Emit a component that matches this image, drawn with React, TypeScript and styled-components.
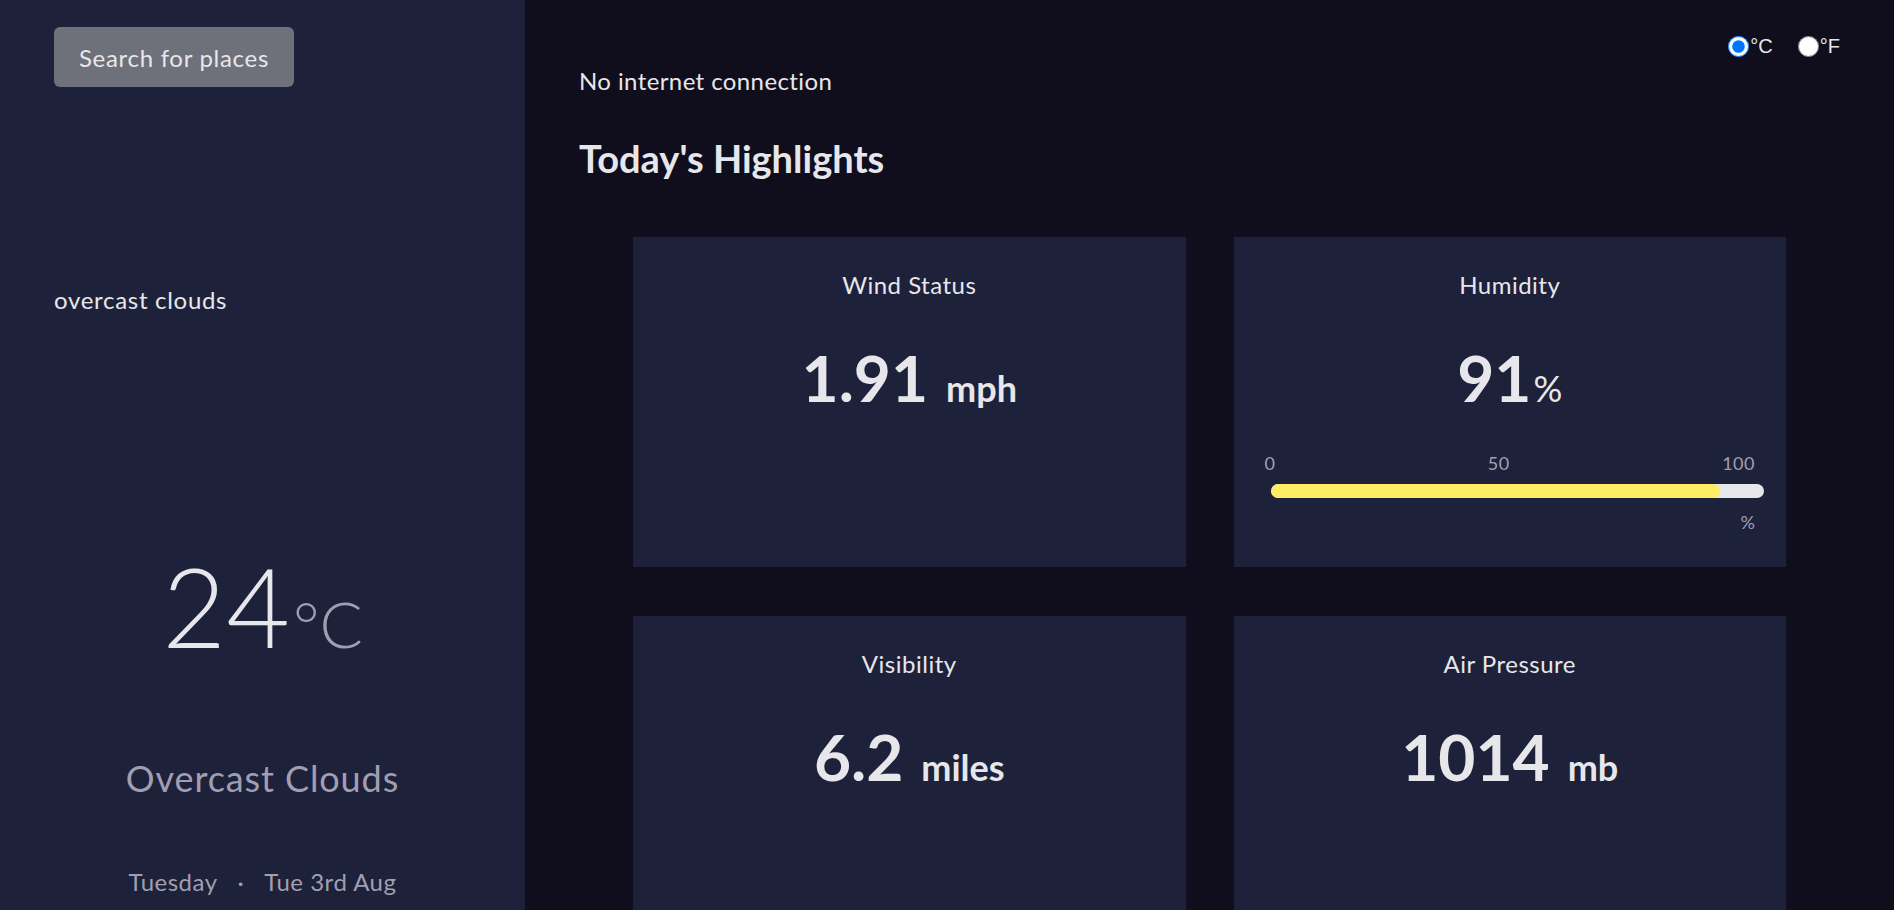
import React from "react";
import styled, { createGlobalStyle } from "styled-components";

const GlobalStyle = createGlobalStyle`
  html, body {
    margin: 0;
    padding: 0;
  }
  body {
    background: #100e1d;
    color: #e7e7eb;
    font-family: Lato, "Open Sans", sans-serif;
  }
  * {
    box-sizing: border-box;
  }
`;

const Layout = styled.div`
  display: flex;
  height: 100vh;
  overflow: hidden;
`;

const Sidebar = styled.aside`
  flex: 0 0 525px;
  background: #1e213a;
  display: flex;
  flex-direction: column;
  padding: 27px 54px;
  overflow: hidden;
  & > * {
    flex-shrink: 0;
  }
`;

const SearchButton = styled.button`
  align-self: flex-start;
  width: 240px;
  height: 60px;
  padding: 0 20px;
  border: none;
  border-radius: 6px;
  background: #6e707a;
  color: #e7e7eb;
  font-family: inherit;
  font-size: 24px;
  letter-spacing: 0.7px;
  cursor: pointer;
`;

const IconAlt = styled.span`
  margin-top: 200px;
  font-size: 24px;
  line-height: 26px;
  letter-spacing: 0.7px;
  color: #e7e7eb;
`;

const TempRow = styled.div`
  margin-top: 237px;
  display: flex;
  justify-content: center;
  align-items: baseline;
`;

const TempValue = styled.span`
  font-size: 110px;
  line-height: 110px;
  font-weight: 300;
  color: #e7e7eb;
`;

const TempUnit = styled.span`
  margin-left: 3px;
  font-size: 64px;
  line-height: 64px;
  font-weight: 300;
  color: #a09fb1;
`;

const Condition = styled.div`
  margin-top: 96px;
  text-align: center;
  font-size: 36px;
  line-height: 44px;
  letter-spacing: 0.9px;
  color: #a09fb1;
`;

const DateRow = styled.div`
  margin-top: 68px;
  display: flex;
  justify-content: center;
  gap: 20px;
  font-size: 24px;
  line-height: 28px;
  letter-spacing: 0.5px;
  color: #a09fb1;
`;

const Main = styled.main`
  flex: 1;
  overflow-y: auto;
  scrollbar-width: none;
  padding: 36px 54px 48px;
  &::-webkit-scrollbar {
    display: none;
  }
`;

const UnitSwitch = styled.div`
  display: flex;
  justify-content: flex-end;
  gap: 25px;
`;

const UnitOption = styled.label`
  display: flex;
  align-items: center;
  gap: 1px;
  font-family: "Liberation Sans", Arial, sans-serif;
  font-size: 20px;
  line-height: 21px;
  color: #e7e7eb;
  cursor: pointer;
`;

const RadioInput = styled.input`
  width: 21px;
  height: 21px;
  margin: 0;
`;

const Status = styled.p`
  margin: 10px 0 0;
  font-size: 24px;
  line-height: 28px;
  letter-spacing: 0.4px;
`;

const Heading = styled.h2`
  margin: 41px 0 0;
  font-size: 38px;
  line-height: 44px;
  font-weight: 700;
`;

const CardGrid = styled.section`
  margin-top: 57px;
  padding: 0 54px;
  display: grid;
  grid-template-columns: 1fr 1fr;
  gap: 49px 48px;
`;

const Card = styled.article`
  height: 330px;
  background: #1e213a;
  display: flex;
  flex-direction: column;
  align-items: center;
  padding-top: 34px;
`;

const CardTitle = styled.h3`
  margin: 0;
  font-size: 24px;
  line-height: 28px;
  font-weight: 400;
  letter-spacing: 0.5px;
`;

const ValueRow = styled.div`
  margin-top: 47px;
  display: flex;
  align-items: baseline;
  justify-content: center;
`;

const Value = styled.span`
  font-size: 64px;
  line-height: 64px;
  font-weight: 700;
`;

const Unit = styled.span<{ $tight?: boolean }>`
  margin-left: ${(p) => (p.$tight ? "2px" : "18px")};
  font-size: 36px;
  font-weight: ${(p) => (p.$tight ? 400 : 700)};
`;

const Scale = styled.div`
  align-self: stretch;
  margin: 43px 31px 0;
  display: flex;
  flex-direction: column;
`;

const ScaleLabels = styled.div`
  display: flex;
  justify-content: space-between;
  font-size: 18px;
  line-height: 21px;
  letter-spacing: 0.5px;
  color: #a09fb1;
`;

const Track = styled.div`
  margin: 10px -9px 0 6px;
  height: 14px;
  border-radius: 7px;
  background: #e7e7eb;
  overflow: hidden;
`;

const Fill = styled.div`
  height: 100%;
  border-radius: 7px;
  background: #ffec65;
`;

const ScaleUnit = styled.div`
  margin-top: 14px;
  text-align: right;
  font-size: 18px;
  line-height: 21px;
  color: #a09fb1;
`;

const humidity = 91;

export default function App() {
  return (
    <>
      <GlobalStyle />
      <Layout>
        <Sidebar>
          <SearchButton>Search for places</SearchButton>
          <IconAlt>overcast clouds</IconAlt>
          <TempRow>
            <TempValue>24</TempValue>
            <TempUnit>°C</TempUnit>
          </TempRow>
          <Condition>Overcast Clouds</Condition>
          <DateRow>
            <span>Tuesday</span>
            <span>·</span>
            <span>Tue 3rd Aug</span>
          </DateRow>
        </Sidebar>
        <Main>
          <UnitSwitch>
            <UnitOption>
              <RadioInput type="radio" name="unit" defaultChecked />
              °C
            </UnitOption>
            <UnitOption>
              <RadioInput type="radio" name="unit" />
              °F
            </UnitOption>
          </UnitSwitch>
          <Status>No internet connection</Status>
          <Heading>Today's Highlights</Heading>
          <CardGrid>
            <Card>
              <CardTitle>Wind Status</CardTitle>
              <ValueRow>
                <Value>1.91</Value>
                <Unit>mph</Unit>
              </ValueRow>
            </Card>
            <Card>
              <CardTitle>Humidity</CardTitle>
              <ValueRow>
                <Value>{humidity}</Value>
                <Unit $tight>%</Unit>
              </ValueRow>
              <Scale>
                <ScaleLabels>
                  <span>0</span>
                  <span>50</span>
                  <span>100</span>
                </ScaleLabels>
                <Track>
                  <Fill style={{ width: `${humidity}%` }} />
                </Track>
                <ScaleUnit>%</ScaleUnit>
              </Scale>
            </Card>
            <Card>
              <CardTitle>Visibility</CardTitle>
              <ValueRow>
                <Value>6.2</Value>
                <Unit>miles</Unit>
              </ValueRow>
            </Card>
            <Card>
              <CardTitle>Air Pressure</CardTitle>
              <ValueRow>
                <Value>1014</Value>
                <Unit>mb</Unit>
              </ValueRow>
            </Card>
          </CardGrid>
        </Main>
      </Layout>
    </>
  );
}
